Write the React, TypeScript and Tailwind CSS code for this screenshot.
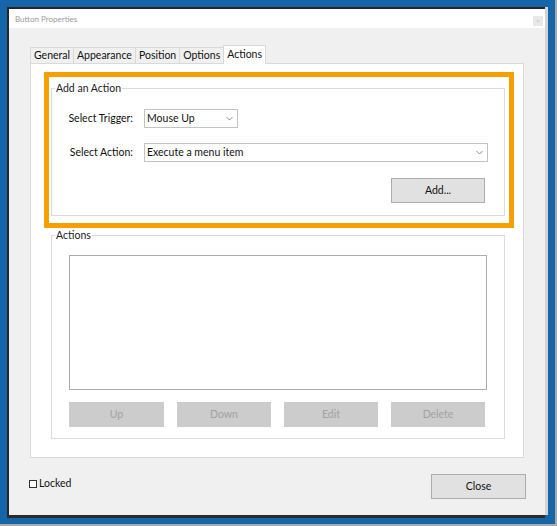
import React from 'react';

const font = { fontFamily: 'Lato, "Noto Sans", sans-serif' };

const tabs = ['General', 'Appearance', 'Position', 'Options', 'Actions'];

function Chevron() {
  return (
    <svg width="7" height="5" viewBox="0 0 7 5" fill="none">
      <path d="M0.5 1l3 3 3-3" stroke="#8a8a8a" strokeWidth="1" />
    </svg>
  );
}

function Combo({ value, width }: { value: string; width: string }) {
  return (
    <div className={`flex h-[19px] items-center justify-between border border-[#c2c2c2] bg-white pl-[2px] pr-[4px] ${width}`}>
      <span className="text-[10.5px] leading-none text-[#111]">{value}</span>
      <Chevron />
    </div>
  );
}

function Group({ title, className, children }: { title: string; className: string; children: React.ReactNode }) {
  return (
    <div className={`relative w-[454px] border border-[#dcdcdc] ${className}`}>
      <span className="absolute -top-[8px] left-[3px] bg-white px-[1px] text-[10.5px] leading-[14px] text-[#222]">
        {title}
      </span>
      {children}
    </div>
  );
}

function WinButton({ label, disabled, width = 'w-[94px]' }: { label: string; disabled?: boolean; width?: string }) {
  return (
    <button
      className={`h-[25px] border text-[10.5px] ${width} ${
        disabled ? 'border-[#cccccc] bg-[#cccccc] text-[#a2a2a2]' : 'border-[#adadad] bg-[#e1e1e1] text-[#111]'
      }`}
    >
      {label}
    </button>
  );
}

export default function App() {
  return (
    <div className="h-[526px] w-[557px] overflow-hidden border-b-2 border-r-2 border-[#a9a9a9] bg-[#1466a8]" style={font}>
      <div className="ml-[7px] mt-[7px] w-[538px] border-l-2 border-t-2 border-[#262626] shadow-[3px_0_0_#d2d2d2,0_3px_0_#2b2b2b]">
        <div className="flex h-[506px] w-[536px] flex-col bg-[#f0f0f0]">
          {/* Title bar */}
          <div className="flex h-[19px] items-center justify-between bg-white pl-[6px] pr-[2px]">
            <span className="text-[8px] text-[#9a9a9a]">Button Properties</span>
            <span className="mt-[4px] flex h-[10px] w-[10px] items-center justify-center bg-[#e8e8e8] text-[6px] leading-none text-[#bbb]">×</span>
          </div>

          {/* Tabs */}
          <div className="flex items-end pl-[21px] pt-[17px]">
            {tabs.map((t) => {
              const active = t === 'Actions';
              return (
                <div
                  key={t}
                  className={`relative -mr-px flex items-center border border-b-0 border-[#d9d9d9] px-[3px] text-[10.5px] text-[#111] ${
                    active ? 'z-10 -mb-px h-[19px] bg-white pb-[1px]' : 'h-[16px] bg-[#f0f0f0]'
                  }`}
                >
                  {t}
                </div>
              );
            })}
          </div>

          {/* Tab panel */}
          <div className="relative ml-[21px] h-[395px] w-[494px] border border-[#d9d9d9] bg-white pl-[20px] pt-[24px]">
            <Group title="Add an Action" className="h-[128px]">
              <div className="flex items-center pt-[20px]">
                <span className="w-[81px] text-right text-[10.5px] text-[#111]">Select Trigger:</span>
                <div className="ml-[11px]">
                  <Combo value="Mouse Up" width="w-[94px]" />
                </div>
              </div>
              <div className="flex items-center pt-[15px]">
                <span className="w-[81px] text-right text-[10.5px] text-[#111]">Select Action:</span>
                <div className="ml-[11px]">
                  <Combo value="Execute a menu item" width="w-[344px]" />
                </div>
              </div>
              <div className="flex justify-end pr-[19px] pt-[16px]">
                <WinButton label="Add..." />
              </div>
            </Group>

            <Group title="Actions" className="mt-[19px] h-[204px]">
              <div className="ml-[17px] mt-[19px] h-[135px] w-[418px] border border-[#ababab] bg-white" />
              <div className="ml-[17px] mt-[12px] flex gap-[13px]">
                <WinButton label="Up" disabled width="w-[95px]" />
                <WinButton label="Down" disabled />
                <WinButton label="Edit" disabled />
                <WinButton label="Delete" disabled />
              </div>
            </Group>

            {/* highlight annotation */}
            <div className="pointer-events-none absolute left-[13px] top-[8px] h-[156px] w-[470px] border-[5px] border-[#f79e00]" />
          </div>

          {/* Footer */}
          <div className="flex items-start justify-between pl-[20px] pr-[19px] pt-[16px]">
            <label className="mt-[2px] flex items-center gap-[2px] text-[10.5px] text-[#111]">
              <span className="h-[8px] w-[8px] border border-[#333] bg-white" />
              Locked
            </label>
            <WinButton label="Close" width="w-[95px]" />
          </div>
        </div>
      </div>
    </div>
  );
}
